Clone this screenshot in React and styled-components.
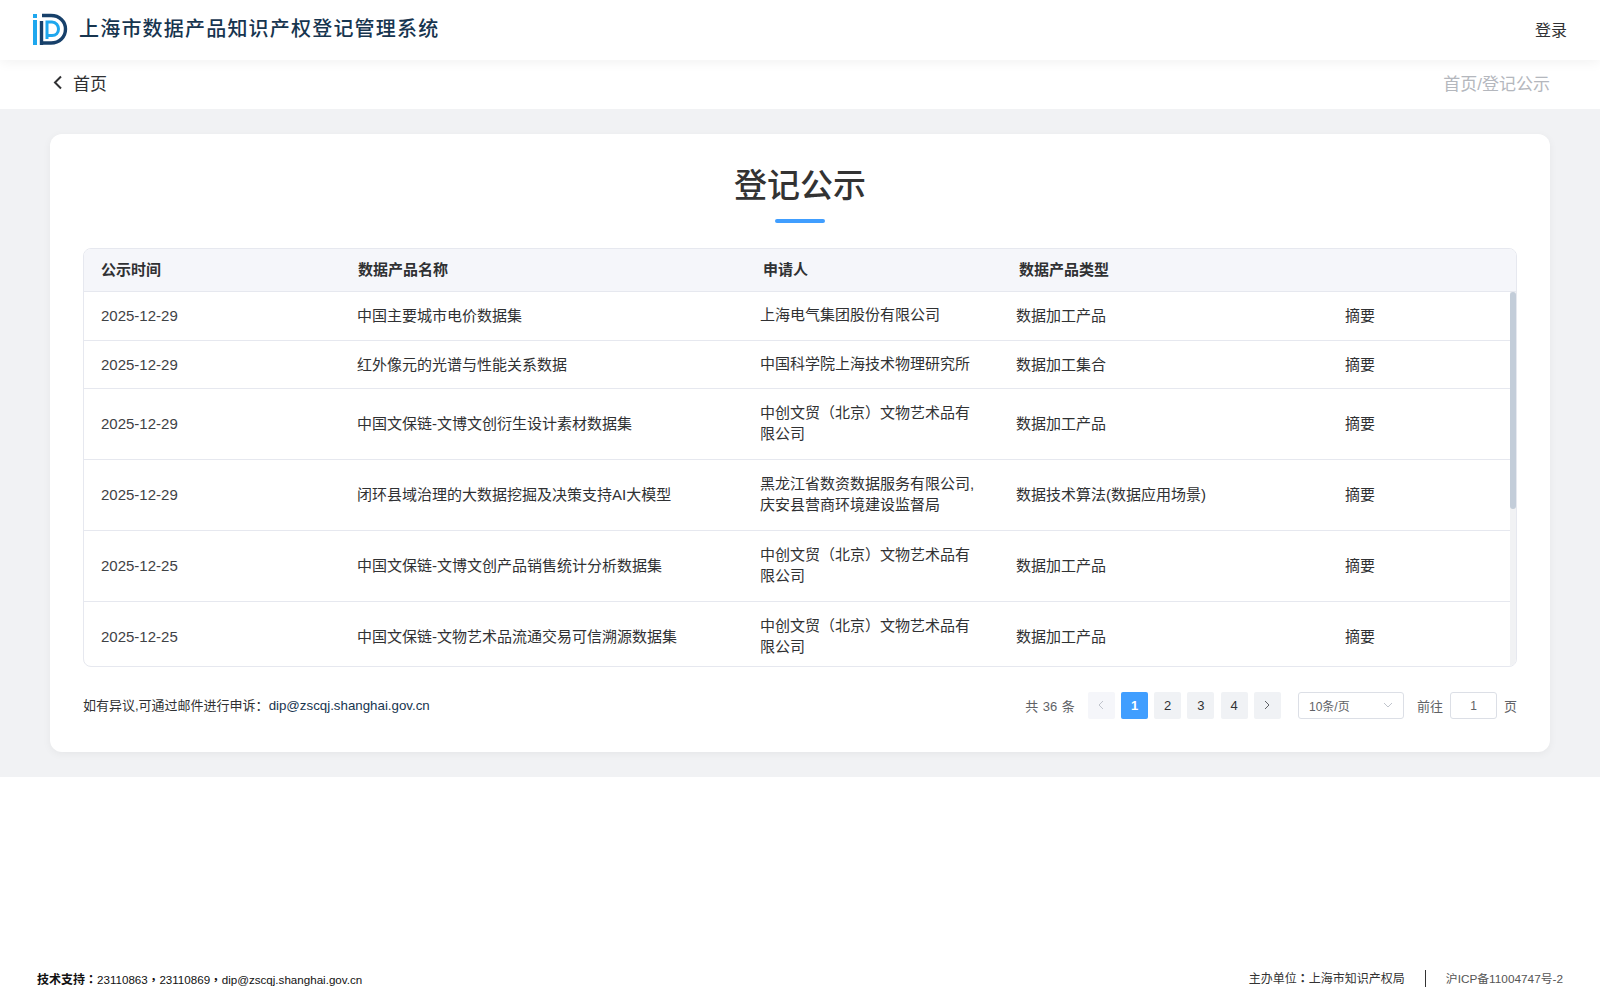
import React from "react";
import styled, { createGlobalStyle } from "styled-components";

const GlobalStyle = createGlobalStyle`
  html, body {
    margin: 0;
    padding: 0;
    height: 100%;
    background: #fff;
    font-family: "Liberation Sans", "Noto Sans CJK SC", sans-serif;
  }
  #root { height: 100%; }
  * { box-sizing: border-box; }
`;

const Page = styled.div`
  height: 1000px;
  display: flex;
  flex-direction: column;
  background: #fff;
`;

const Header = styled.header`
  height: 60px;
  flex: none;
  display: flex;
  align-items: center;
  justify-content: space-between;
  padding: 0 33px 2px 32px;
  background: #fff;
  box-shadow: 0 2px 12px rgba(0, 0, 0, 0.06);
  position: relative;
`;

const Brand = styled.div`
  display: flex;
  align-items: center;
  gap: 11px;
`;

const BrandTitle = styled.h1`
  margin: 0;
  font-size: 20px;
  line-height: 28px;
  font-weight: 500;
  letter-spacing: 1.2px;
  color: #17354f;
`;

const Login = styled.a`
  font-size: 16px;
  color: #303133;
`;

const SubBar = styled.div`
  height: 49px;
  flex: none;
  display: flex;
  align-items: center;
  justify-content: space-between;
  padding: 0 50px 4px 52px;
`;

const Back = styled.div`
  display: flex;
  align-items: center;
  gap: 10px;
  font-size: 17px;
  color: #303133;
`;

const Crumb = styled.div`
  font-size: 17px;
  color: #b4b7bd;
`;

const Main = styled.main`
  flex: none;
  background: #f1f2f4;
  padding: 25px 50px;
`;

const Card = styled.section`
  height: 618px;
  background: #fff;
  border-radius: 12px;
  box-shadow: 0 2px 8px rgba(0, 0, 0, 0.05);
  padding: 30px 33px 0;
`;

const Title = styled.h2`
  margin: 0;
  font-size: 33px;
  line-height: 44px;
  font-weight: 500;
  text-align: center;
  color: #333;
`;

const TitleBar = styled.div`
  width: 50px;
  height: 4px;
  margin: 11px auto 25px;
  border-radius: 2px;
  background: #409eff;
`;

const Table = styled.div`
  height: 419px;
  border: 1px solid #e6e8ef;
  border-radius: 8px;
  overflow: hidden;
  display: flex;
  flex-direction: column;
`;

const HeadRow = styled.div`
  height: 43px;
  flex: none;
  display: grid;
  grid-template-columns: 257px 405px 256px 1fr;
  align-items: center;
  padding: 0 0 3px 17px;
  background: #f5f6fa;
  border-bottom: 1px solid #e6e8ef;
  font-size: 15px;
  font-weight: 700;
  color: #303133;
`;

const BodyWrap = styled.div`
  flex: 1;
  overflow: hidden;
  display: flex;
`;

const Rows = styled.div`
  flex: 1;
  min-width: 0;
  overflow: hidden;
`;

const Row = styled.div`
  height: ${(p) => (p.$tall ? "71px" : "48.5px")};
  display: grid;
  grid-template-columns: 256px 403px 256px 329px 1fr;
  align-items: center;
  padding-left: 17px;
  border-bottom: 1px solid #e6e8ef;
  font-size: 15px;
  line-height: 21.5px;
  color: #303133;
`;

const DateCell = styled.div`
  font-size: 15px;
  color: #3f4246;
`;

const Applicant = styled.div`
  width: 216px;
  margin-top: -2px;
`;

const Scroll = styled.div`
  width: 6px;
  flex: none;
  background: #f1f2f4;
`;

const Thumb = styled.div`
  height: 217px;
  background: #c3cdd9;
  border-radius: 3px;
`;

const Footer = styled.div`
  display: flex;
  align-items: center;
  justify-content: space-between;
  margin-top: 24px;
  height: 28px;
`;

const Notice = styled.div`
  padding-bottom: 2px;
  font-size: 13px;
  color: #303133;
`;

const Mail = styled.span`
  font-size: 13.3px;
  color: #17354f;
`;

const Pager = styled.div`
  display: flex;
  align-items: center;
  font-size: 13px;
  color: #606266;
`;

const Total = styled.span`
  margin-right: 13px;
  word-spacing: 1px;
`;

const PageBtn = styled.button`
  width: 27px;
  height: 27px;
  margin-right: 6.2px;
  padding: 0;
  border: 0;
  border-radius: 2px;
  display: flex;
  align-items: center;
  justify-content: center;
  font: ${(p) => (p.$active ? 700 : 400)} 13px "Liberation Sans", sans-serif;
  color: ${(p) => (p.$active ? "#fff" : p.$off ? "#c0c4cc" : "#303133")};
  background: ${(p) => (p.$active ? "#409eff" : p.$off ? "#f5f6fa" : "#f0f2f5")};
`;

const SizeSelect = styled.div`
  width: 106px;
  height: 27px;
  margin: 0 13px 0 11px;
  padding: 0 10px;
  display: flex;
  align-items: center;
  justify-content: space-between;
  border: 1px solid #dcdfe6;
  border-radius: 3px;
  font-size: 12px;
  color: #606266;
`;

const JumpInput = styled.div`
  width: 47px;
  height: 27px;
  margin: 0 7px;
  padding-top: 2px;
  display: flex;
  align-items: center;
  justify-content: center;
  border: 1px solid #dcdfe6;
  border-radius: 3px;
  font-size: 12px;
  color: #606266;
`;

const PageFooter = styled.footer`
  margin-top: auto;
  height: 40px;
  display: flex;
  align-items: center;
  justify-content: space-between;
  padding: 0 37px 4px;
  font-size: 12px;
  color: #111;
`;

const Support = styled.div`
  font-size: 12px;
`;

const SupportLabel = styled.b`
  font-weight: 700;
`;

const SupportText = styled.span`
  font-size: 11.6px;
`;

// the footer punctuation sits centred in its cell, as in the TC glyphs
const Punct = styled.span`
  font-family: "Noto Sans CJK TC", sans-serif;
  font-weight: 700;
`;

const Host = styled.div`
  display: flex;
  align-items: center;
  padding-bottom: 2px;
  font-size: 12px;
  color: #333;
`;

const Icp = styled.span`
  font-size: 11.8px;
  color: #555;
`;

const Divider = styled.span`
  width: 1px;
  height: 17px;
  margin: 2px 20px 0;
  background: #333;
`;

const Logo = () => (
  <svg width="36" height="32" viewBox="0 0 36 32" fill="none">
    <rect x="1" y="1" width="4" height="4" fill="#1ea7ee" />
    <rect x="1" y="7" width="4" height="25" fill="#1ea7ee" />
    <path d="M9.5 32V8" stroke="#17406a" strokeWidth="3.4" />
    <path d="M10 2.5H19C27.5 2.5 33.5 8.5 33.5 16C33.5 24 27.5 30 19 30H11" stroke="#17406a" strokeWidth="3.4" />
    <path d="M15 26V9H20C24 9 26.5 12.5 26.5 16C26.5 20 24 22.5 20 22.5H15" stroke="#1ea7ee" strokeWidth="3" />
  </svg>
);

const BackArrow = () => (
  <svg width="11" height="15" viewBox="0 0 11 15" fill="none">
    <path d="M9 1.5L3 7.5L9 13.5" stroke="#303133" strokeWidth="2" />
  </svg>
);

const Chevron = ({ dir = "left", color = "currentColor" }) => (
  <svg width="10" height="10" viewBox="0 0 10 10" fill="none">
    <path d={dir === "left" ? "M7 1L3 5L7 9" : dir === "right" ? "M3 1L7 5L3 9" : "M1 3L5 7L9 3"} stroke={color} strokeWidth="1" />
  </svg>
);

const rows = [
  ["2025-12-29", "中国主要城市电价数据集", "上海电气集团股份有限公司", "数据加工产品"],
  ["2025-12-29", "红外像元的光谱与性能关系数据", "中国科学院上海技术物理研究所", "数据加工集合"],
  ["2025-12-29", "中国文保链-文博文创衍生设计素材数据集", "中创文贸（北京）文物艺术品有限公司", "数据加工产品", true],
  ["2025-12-29", "闭环县域治理的大数据挖掘及决策支持AI大模型", "黑龙江省数资数据服务有限公司,庆安县营商环境建设监督局", "数据技术算法(数据应用场景)", true],
  ["2025-12-25", "中国文保链-文博文创产品销售统计分析数据集", "中创文贸（北京）文物艺术品有限公司", "数据加工产品", true],
  ["2025-12-25", "中国文保链-文物艺术品流通交易可信溯源数据集", "中创文贸（北京）文物艺术品有限公司", "数据加工产品", true],
];

export default function App() {
  return (
    <Page>
      <GlobalStyle />
      <Header>
        <Brand>
          <Logo />
          <BrandTitle>上海市数据产品知识产权登记管理系统</BrandTitle>
        </Brand>
        <Login>登录</Login>
      </Header>
      <SubBar>
        <Back>
          <BackArrow />
          首页
        </Back>
        <Crumb>首页/登记公示</Crumb>
      </SubBar>
      <Main>
        <Card>
          <Title>登记公示</Title>
          <TitleBar />
          <Table>
            <HeadRow>
              <div>公示时间</div>
              <div>数据产品名称</div>
              <div>申请人</div>
              <div>数据产品类型</div>
            </HeadRow>
            <BodyWrap>
              <Rows>
                {rows.map((r, i) => (
                  <Row key={i} $tall={r[4]}>
                    <DateCell>{r[0]}</DateCell>
                    <div>{r[1]}</div>
                    <Applicant>{r[2]}</Applicant>
                    <div>{r[3]}</div>
                    <div>摘要</div>
                  </Row>
                ))}
              </Rows>
              <Scroll>
                <Thumb />
              </Scroll>
            </BodyWrap>
          </Table>
          <Footer>
            <Notice>
              如有异议,可通过邮件进行申诉：<Mail>dip@zscqj.shanghai.gov.cn</Mail>
            </Notice>
            <Pager>
              <Total>共 36 条</Total>
              <PageBtn $off>
                <Chevron />
              </PageBtn>
              <PageBtn $active>1</PageBtn>
              <PageBtn>2</PageBtn>
              <PageBtn>3</PageBtn>
              <PageBtn>4</PageBtn>
              <PageBtn>
                <Chevron dir="right" color="#606266" />
              </PageBtn>
              <SizeSelect>
                10条/页
                <Chevron dir="down" color="#c0c4cc" />
              </SizeSelect>
              前往
              <JumpInput>1</JumpInput>页
            </Pager>
          </Footer>
        </Card>
      </Main>
      <PageFooter>
        <Support>
          <SupportLabel>技术支持<Punct>：</Punct></SupportLabel>
          <SupportText>
            23110863<Punct>，</Punct>23110869<Punct>，</Punct>dip@zscqj.shanghai.gov.cn
          </SupportText>
        </Support>
        <Host>
          主办单位<Punct>：</Punct>上海市知识产权局
          <Divider />
          <Icp>沪ICP备11004747号-2</Icp>
        </Host>
      </PageFooter>
    </Page>
  );
}
